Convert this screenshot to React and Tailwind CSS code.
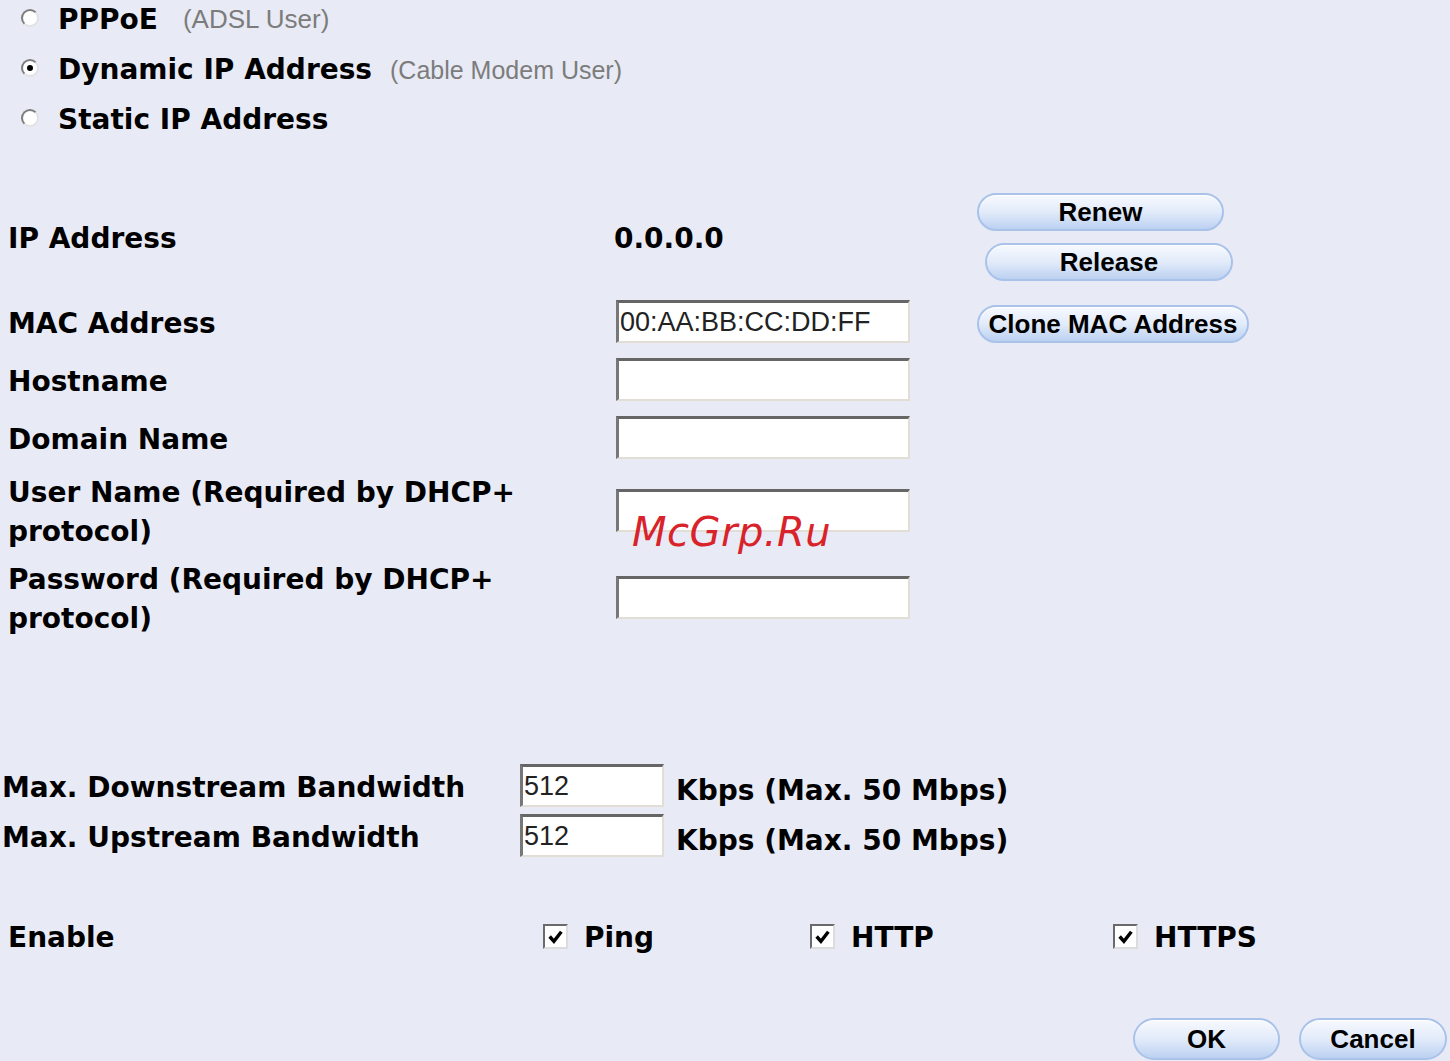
import React from "react";

/* WAN setup form (Dynamic IP) */

const font = "font-['DejaVu_Sans',Verdana,sans-serif] font-bold text-[28px] text-black pt-[4px]";
const label = `${font} leading-none`;

function Radio({ checked }) {
    return (
        <span className="w-[18px] h-[18px] rounded-full bg-white border-2 border-t-[#7d7d7d] border-l-[#7d7d7d] border-r-[#e2e2e2] border-b-[#e2e2e2] flex items-center justify-center shrink-0">
            {checked && <span className="w-[6px] h-[6px] rounded-full bg-black" />}
        </span>
    );
}

function Field({ value = "", width = "w-[294px]" }) {
    return (
        <input
            readOnly
            defaultValue={value}
            className={`${width} h-[43px] bg-white border-t-[3px] border-l-[3px] border-r-2 border-b-2 border-t-[#666] border-l-[#777] border-r-[#e2ded6] border-b-[#e2ded6] pl-[1px] font-['Liberation_Sans',Arial,sans-serif] text-[27px] text-[#222] outline-none`}
        />
    );
}

function PillButton({ children, className = "" }) {
    return (
        <button
            className={`h-[38px] rounded-full border-2 border-[#a9c2ea] bg-gradient-to-b from-[#f7f9fe] via-[#e2ebfa] to-[#bcd1f1] font-['Liberation_Sans',Arial,sans-serif] font-bold text-[26px] text-black leading-none shadow-[0_1px_0_#ffffff_inset] ${className}`}
        >
            {children}
        </button>
    );
}

function Check({ children, className = "" }) {
    return (
        <div className={`flex items-center gap-[16px] ${className}`}>
            <span className="w-[25px] h-[25px] bg-white border-2 border-t-[#6a6a6a] border-l-[#6a6a6a] border-r-[#dcdcdc] border-b-[#dcdcdc] flex items-center justify-center">
                <svg width="17" height="17" viewBox="0 0 16 16">
                    <polyline points="2.5,8 6.5,12.5 13.5,3.5" fill="none" stroke="#000" strokeWidth="3.2" />
                </svg>
            </span>
            <span className={label}>{children}</span>
        </div>
    );
}

export default function App() {
    return (
        <div className="relative w-[1450px] h-[1061px] overflow-hidden bg-[#e8ebf5]">
            <div className="flex flex-col">
                {/* connection type */}
                <div className="-mt-[7px] flex flex-col">
                    <div className="h-[50px] flex items-center pl-[21px] gap-[19px]">
                        <Radio />
                        <span className={label}>PPPoE</span>
                        <span className="ml-[6px] font-['Liberation_Sans',Arial,sans-serif] text-[26px] text-[#7c7c7c] leading-none pt-[2px]">(ADSL User)</span>
                    </div>
                    <div className="h-[50px] flex items-center pl-[21px] gap-[19px]">
                        <Radio checked />
                        <span className={label}>Dynamic IP Address</span>
                        <span className="-ml-[1px] font-['Liberation_Sans',Arial,sans-serif] text-[25px] text-[#7c7c7c] leading-none pt-[4px]">(Cable Modem User)</span>
                    </div>
                    <div className="h-[50px] flex items-center pl-[21px] gap-[19px]">
                        <Radio />
                        <span className={label}>Static IP Address</span>
                    </div>
                </div>

                {/* IP address */}
                <div className="mt-[50px] flex items-center pl-[8px]">
                    <div className={`w-[606px] ${label}`}>IP Address</div>
                    <div className={`w-[363px] ${label}`}>0.0.0.0</div>
                    <div className="flex flex-col gap-[12px]">
                        <PillButton className="w-[247px]">Renew</PillButton>
                        <PillButton className="w-[248px] ml-[8px]">Release</PillButton>
                    </div>
                </div>

                <div className="mt-[19px] flex items-center pl-[8px]">
                    <div className={`w-[606px] ${label}`}>MAC Address</div>
                    <div className="w-[363px] pl-[2px]">
                        <Field value="00:AA:BB:CC:DD:FF" />
                    </div>
                    <PillButton className="w-[272px] mt-[5px]">Clone MAC Address</PillButton>
                </div>

                <div className="mt-[15px] flex items-center pl-[8px]">
                    <div className={`w-[606px] ${label}`}>Hostname</div>
                    <div className="pl-[2px]"><Field /></div>
                </div>

                <div className="mt-[15px] flex items-center pl-[8px]">
                    <div className={`w-[606px] ${label}`}>Domain Name</div>
                    <div className="pl-[2px]"><Field /></div>
                </div>

                <div className="mt-[10px] flex items-center pl-[8px]">
                    <div className={`w-[606px] ${font} leading-[39px]`}>
                        User Name (Required by DHCP+
                        <br />
                        protocol)
                    </div>
                    <div className="pl-[2px]"><Field /></div>
                </div>

                <div className="mt-[5px] flex items-center pl-[8px]">
                    <div className={`w-[606px] ${font} leading-[39px]`}>
                        Password (Required by DHCP+
                        <br />
                        protocol)
                    </div>
                    <div className="pl-[2px]"><Field /></div>
                </div>

                {/* bandwidth */}
                <div className="mt-[126px] flex items-center pl-[2px]">
                    <div className={`w-[518px] ${label}`}>Max. Downstream Bandwidth</div>
                    <Field value="512" width="w-[144px]" />
                    <span className={`ml-[12px] mt-[6px] ${label}`}>Kbps (Max. 50 Mbps)</span>
                </div>
                <div className="mt-[7px] flex items-center pl-[2px]">
                    <div className={`w-[518px] ${label}`}>Max. Upstream Bandwidth</div>
                    <Field value="512" width="w-[144px]" />
                    <span className={`ml-[12px] mt-[6px] ${label}`}>Kbps (Max. 50 Mbps)</span>
                </div>

                {/* remote services */}
                <div className="mt-[64px] h-[30px] flex items-center pl-[8px]">
                    <div className={`w-[535px] ${label}`}>Enable</div>
                    <Check className="w-[267px]">Ping</Check>
                    <Check className="w-[303px]">HTTP</Check>
                    <Check>HTTPS</Check>
                </div>

                <div className="mt-[67px] flex justify-end gap-[19px] pr-[3px]">
                    <PillButton className="w-[147px] h-[42px]">OK</PillButton>
                    <PillButton className="w-[148px] h-[42px]">Cancel</PillButton>
                </div>
            </div>

            {/* watermark */}
            <div className="absolute left-[632px] top-[512px] font-['DejaVu_Sans',sans-serif] italic text-[40px] leading-none text-[#d9232a] tracking-[0.5px]">
                McGrp.Ru
            </div>
        </div>
    );
}
